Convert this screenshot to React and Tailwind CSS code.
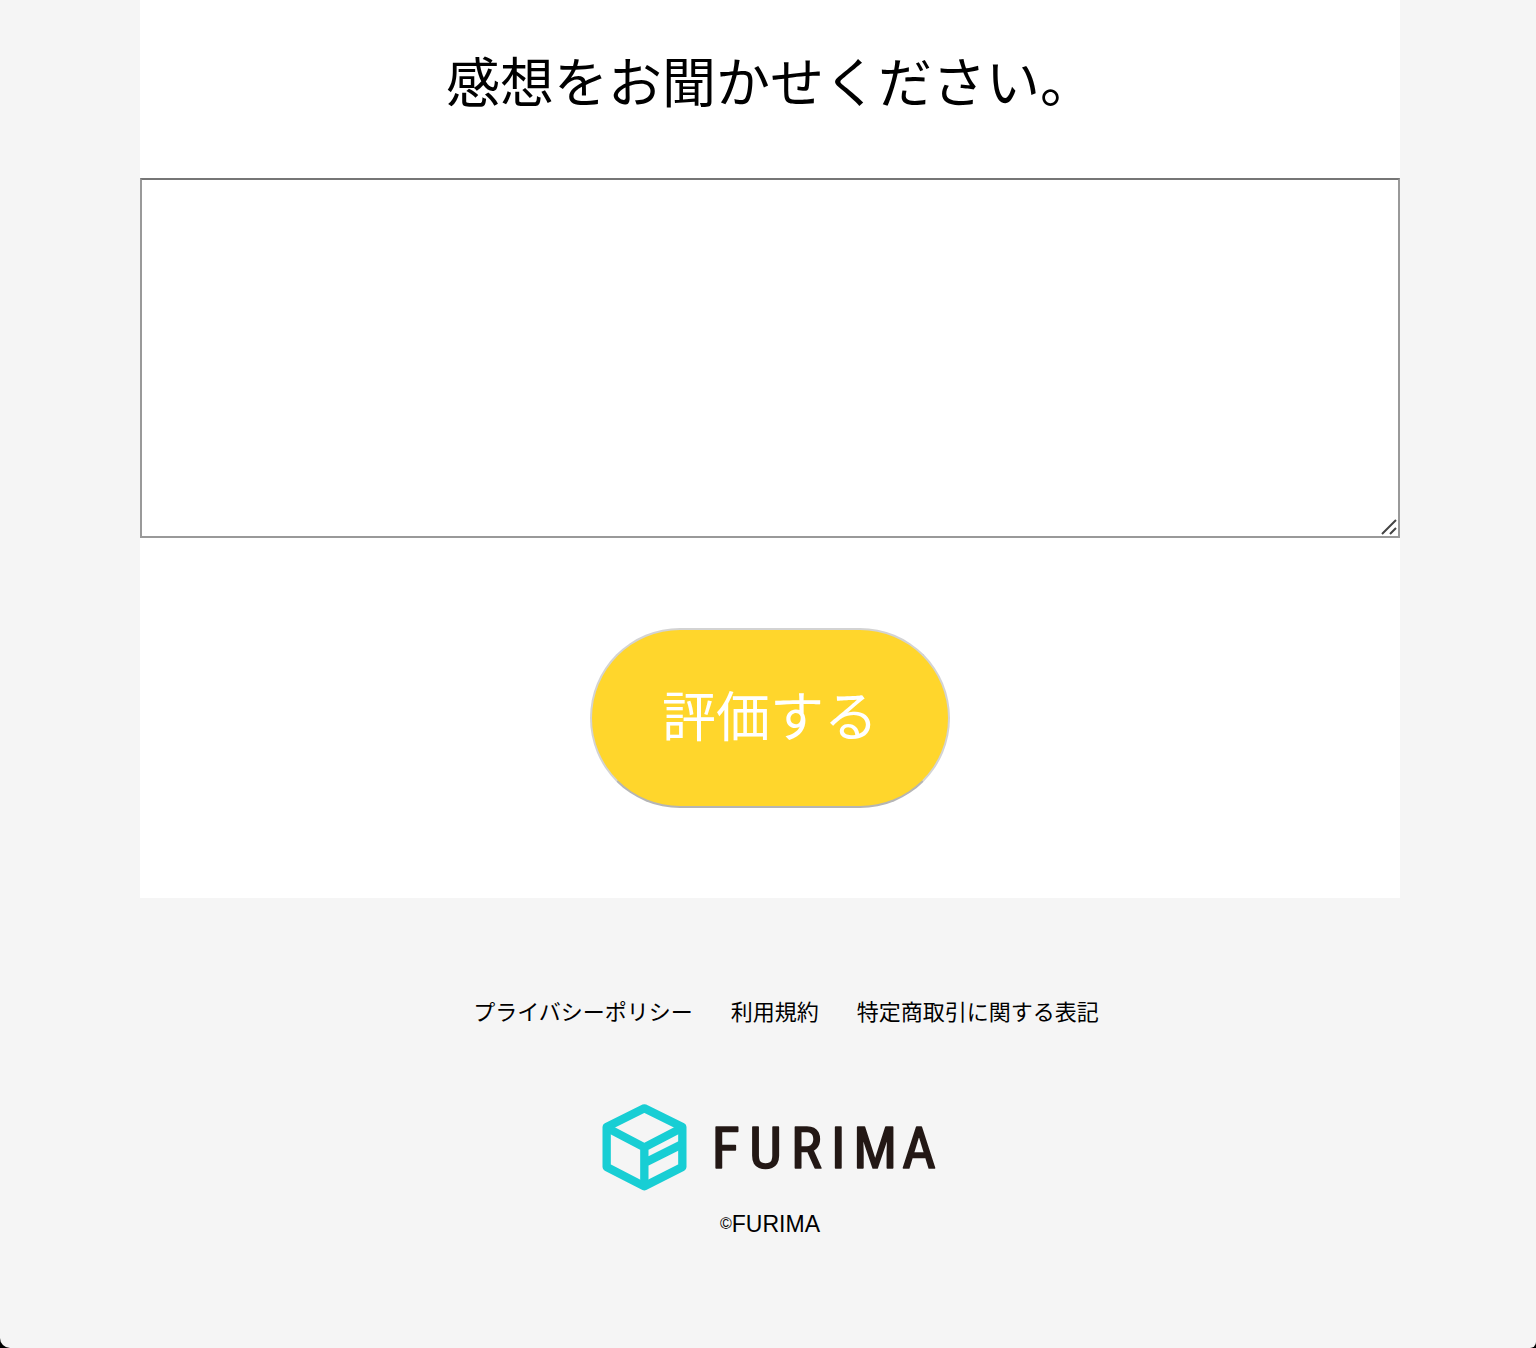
const links = ["プライバシーポリシー", "利用規約", "特定商取引に関する表記"];

function FurimaLogo() {
  return (
    <svg viewBox="40 38 1002 267" className="h-[89px] w-[334px] overflow-visible" role="img" aria-label="FURIMA">
      <g fill="none" stroke="#18ced4" strokeWidth="25" strokeLinejoin="round">
        <path d="M164 54 278 110V230L164 288 51 230V110Z" />
        <path d="M51 112 164 171 278 112M164 171V288M164 218 278 161" />
      </g>
      <text
        y="234"
        x="366 479 604 724 791 938"
        fontSize="174"
        fill="#231815"
        stroke="#231815"
        strokeWidth="5"
        strokeLinejoin="round"
        fontFamily="'Roboto Condensed', 'Noto Sans CJK JP', sans-serif"
      >
        FURIMA
      </text>
    </svg>
  );
}

function ReviewForm() {
  return (
    <form className="flex flex-col items-center bg-white pb-[90px]" onSubmit={(e) => e.preventDefault()}>
      <label htmlFor="review" className="pt-12 pb-[66px] text-[54px] leading-[64px]">
        感想をお聞かせください。
      </label>
      <div className="relative w-full">
        <textarea
          id="review"
          className="block h-[360px] w-full resize-none border-2 border-[#999] border-t-[#767676] bg-white p-2 text-[28px] outline-none"
        />
        <svg
          viewBox="0 0 16 16"
          className="pointer-events-none absolute right-[3px] bottom-[3px] size-4"
          stroke="#444"
          strokeWidth="2"
          aria-hidden="true"
        >
          <path d="M1 15 15 1M9 15 15 9" />
        </svg>
      </div>
      <button
        type="submit"
        className="mt-[90px] h-[180px] w-[360px] rounded-full border-2 border-[#d3d3d3] border-b-[#b5b5b5] bg-[#ffd62c] pb-2 text-[54px] leading-[64px] text-white"
      >
        評価する
      </button>
    </form>
  );
}

export default function App() {
  return (
    <div className="bg-black">
      <div className="min-h-screen rounded-br-md rounded-bl-[10px] bg-[#f5f5f5] pr-[136px] pl-[140px] font-['Noto_Sans_CJK_JP',sans-serif] text-black">
        <main>
          <ReviewForm />
        </main>
        <footer className="flex flex-col items-center pt-24">
          <nav className="pl-8">
            <ul className="flex gap-[38px] text-[22px] leading-8">
              {links.map((label) => (
                <li key={label}>
                  <a href="#">{label}</a>
                </li>
              ))}
            </ul>
          </nav>
          <div className="mt-[77px]">
            <FurimaLogo />
          </div>
          <p className="mt-4 flex items-center font-['Liberation_Sans',sans-serif] text-[23px] leading-8">
            <small className="text-[16px]">©</small>FURIMA
          </p>
        </footer>
      </div>
    </div>
  );
}
